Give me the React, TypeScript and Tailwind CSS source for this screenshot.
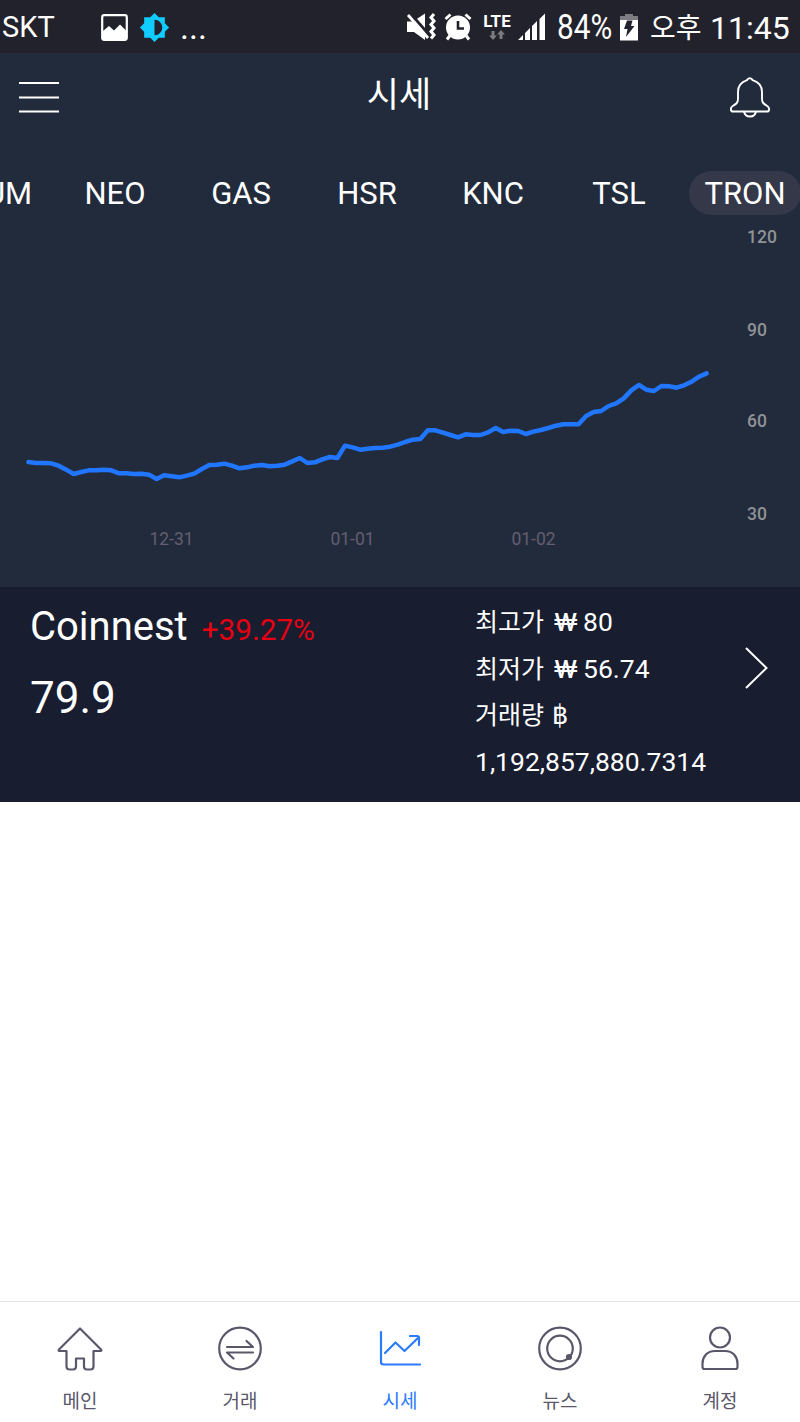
import type { ReactNode } from "react";
import { MdBrightnessMedium } from "react-icons/md";

const coins = ["QTUM", "NEO", "GAS", "HSR", "KNC", "TSL", "TRON"];

// distance below the top of the plot, three units per pixel
const history = [
  336, 339, 339, 340, 347, 359, 372, 366, 361, 361, 359, 361, 370, 370, 372, 371, 374, 387, 376, 379,
  382, 377, 371, 357, 345, 344, 341, 347, 355, 352, 347, 345, 349, 347, 344, 334, 324, 339, 337, 328,
  321, 324, 287, 292, 299, 296, 294, 293, 290, 284, 276, 269, 267, 241, 241, 248, 255, 262, 253, 255,
  255, 247, 234, 246, 242, 243, 252, 245, 240, 234, 227, 223, 223, 223, 198, 186, 183, 168, 160, 145,
  121, 105, 119, 123, 108, 109, 113, 106, 95, 80, 70,
];

const yLabels = [
  { text: "120", y: 26.5 },
  { text: "90", y: 119.5 },
  { text: "60", y: 210.5 },
  { text: "30", y: 304 },
];

const xLabels = [
  { text: "12-31", x: 171.5 },
  { text: "01-01", x: 352.5 },
  { text: "01-02", x: 533.5 },
];

function StatusBar() {
  return (
    <div className="flex h-[53px] items-center bg-[#22222c] text-white">
      <span className="w-[101px] pl-0.5 text-[29px] leading-[54px]">SKT</span>
      <svg width="27" height="27" viewBox="0 0 27 27" className="mt-px shrink-0">
        <rect x="1.2" y="1.2" width="24.6" height="24.6" rx="2" fill="none" stroke="white" strokeWidth="2.2" />
        <path d="M2 17l6-5 5 4.5 6-6 6.500 6.500V25H2z" fill="white" />
      </svg>
      <MdBrightnessMedium className="mt-px ml-[11px] shrink-0 text-[#10ccff]" size={31} />
      <span className="ml-2.5 w-[226px] text-[34px] leading-[56px]">...</span>

      <svg width="30" height="28" viewBox="0 0 30 28" className="mt-px shrink-0">
        <path d="M1 8.500h6l12-8v26.500l-11-8H1z" fill="white" />
        <path d="M4 0l20 23" stroke="#22222c" strokeWidth="3" />
        <path d="M2 2l20 23" stroke="white" strokeWidth="2.800" />
        <path d="M28 1l-3 3.500 3 3.500-3 3.500 3 3.500-3 3.500 3 3.500-3 3.500" fill="none" stroke="white" strokeWidth="3" />
      </svg>
      <svg width="28" height="28" viewBox="0 0 28 28" className="mt-px ml-2 shrink-0">
        <path d="M1.500 6L6.500 1.500M26.500 6L21.500 1.500M6 22.500L3 26.500M22 22.500L25 26.500" stroke="white" strokeWidth="3" />
        <circle cx="14" cy="14.500" r="12" fill="white" />
        <path d="M14 8v7.500h6" fill="none" stroke="#22222c" strokeWidth="2.600" />
      </svg>
      <div className="ml-2.5 flex w-[30px] shrink-0 flex-col items-center">
        <span className="text-[17px] leading-[17px] font-bold">LTE</span>
        <svg width="16" height="10" viewBox="0 0 16 10">
          <path d="M4 10L0 5.500h2.500V1h3v4.500H8zM12 0l4 4.500h-2.500V9h-3V4.500H8z" fill="#7c7c82" />
        </svg>
      </div>
      <svg width="28" height="28" viewBox="0 0 28 28" className="mt-px ml-1.5 shrink-0">
        <path d="M0 27l5-5v5zM7 20l5-5v12H7zM14 13l5-5v19h-5zM21.500 6L27 .5V27h-5.500z" fill="white" />
      </svg>
      <span className="ml-[11px] w-[61px] shrink-0 origin-left scale-x-[0.85] pt-0.5 text-[35px] leading-[58px]">84%</span>
      <svg width="18" height="28" viewBox="0 0 18 28" className="mt-px ml-0.5 shrink-0">
        <path d="M5 1h8v2h5v5H0V3h5z" fill="#7c7c82" />
        <path d="M0 7h18v20.500H0z" fill="white" />
        <path d="M7 7.500h5.500L11 13h3.500L6 24l1.500-8H4z" fill="#22222c" />
      </svg>
      <span className="ml-3 w-[60px] shrink-0 pt-[3px] text-[28px] leading-[53px] whitespace-nowrap">오후</span>
      <span className="shrink-0 pt-[3px] text-[32px] leading-[57px]">11:45</span>
    </div>
  );
}

function Header() {
  return (
    <header className="flex h-[118px] justify-between pr-[29px] pl-[19px] text-white">
      <svg width="40" height="32" viewBox="0 0 40 32" className="mt-7">
        <path d="M0 2h40M0 16.500h40M0 30.500h40" stroke="white" strokeWidth="2" />
      </svg>
      <h1 className="mt-[19px] ml-[10px] text-[35px] leading-[48px]">시세</h1>
      <svg width="42" height="42" viewBox="0 0 42 42" className="mt-[23px]" fill="none" stroke="white" strokeWidth="1.900">
        <path d="M18 4.200a3 3 0 0 1 5.600 0C29.500 6 33 10.500 33 16v7c0 4 2.200 5.200 5.500 7.200 2.200 1.300 2.300 5.300-.5 5.300H4c-2.800 0-2.700-4-.5-5.300C6.800 28.200 9 27 9 23v-7C9 10.500 12.500 6 18 4.200z" />
        <path d="M15 35.500c.6 3.400 3 5 6 5s5.400-1.600 6-5" />
      </svg>
    </header>
  );
}

function CoinTabs() {
  return (
    <div className="flex h-[45px] justify-end overflow-hidden">
      {coins.map((coin) => (
        <div key={coin} className="-mr-[8px] ml-[8px] flex w-[126px] shrink-0 justify-center">
          <button
            className={
              coin === "TRON"
                ? "h-11 w-[112px] rounded-full bg-[#353848] text-[31px] leading-[46px] text-white"
                : "h-11 w-[112px] text-[31px] leading-[46px] text-white"
            }
          >
            {coin}
          </button>
        </div>
      ))}
    </div>
  );
}

function PriceChart() {
  const points = history.map((v, i) => `${28.5 + i * 7.535},${134 + v / 3}`).join(" ");

  return (
    <svg width="800" height="371" viewBox="0 0 800 371" className="block">
      <polyline points={points} fill="none" stroke="#2176ff" strokeWidth="4.500" strokeLinejoin="round" strokeLinecap="round" />
      {yLabels.map((l) => (
        <text key={l.text} x="747" y={l.y} fill="#8f9296" className="text-[17.500px] font-medium">
          {l.text}
        </text>
      ))}
      {xLabels.map((l) => (
        <text key={l.text} x={l.x} y="328.500" textAnchor="middle" fill="#625f70" className="text-[17.500px]">
          {l.text}
        </text>
      ))}
    </svg>
  );
}

function StatRow({ label, symbol, value }: { label: string; symbol: string; value?: string }) {
  return (
    <div className="flex h-[46.670px] items-baseline whitespace-pre">
      <span className="w-[70px] text-[25px]">{label}</span>
      <span className={symbol === "₩" ? "ml-[9px] w-[29px] origin-left scale-x-[1.200]" : "ml-[7px] origin-left scale-x-[0.950]"}>{symbol}</span>
      {value && <span>{value}</span>}
    </div>
  );
}

function ExchangeRow() {
  return (
    <section className="flex h-[215px] bg-[#181d2f] text-white">
      <div className="w-[475px] pt-4 pl-[30px]">
        <div className="flex items-baseline gap-[14px] leading-[48px]">
          <span className="text-[40px]">Coinnest</span>
          <span className="text-[29.700px] text-[#e60012]">+39.27%</span>
        </div>
        <div className="mt-[18px] text-[44px] leading-[52px]">79.9</div>
      </div>
      <div className="w-[240px] pt-3 text-[26.500px] leading-[46.670px]">
        <StatRow label="최고가" symbol="₩" value="80" />
        <StatRow label="최저가" symbol="₩" value="56.74" />
        <StatRow label="거래량" symbol="฿" />
        <div>1,192,857,880.7314</div>
      </div>
      <svg width="24" height="42" viewBox="0 0 24 42" className="mt-[60px] ml-[30px]">
        <path d="M1 1l20.500 20L1 41" fill="none" stroke="white" strokeWidth="2" />
      </svg>
    </section>
  );
}

function NavItem({ label, active, children }: { label: string; active?: boolean; children: ReactNode }) {
  return (
    <button className={active ? "flex flex-1 flex-col items-center pt-6 text-[#2b7bff]" : "flex flex-1 flex-col items-center pt-6 text-[#5b576a]"}>
      <svg width="46" height="46" viewBox="0 0 46 46" fill="none" stroke="currentColor" strokeWidth="2.200" strokeLinecap="round" strokeLinejoin="round">
        {children}
      </svg>
      <span className="mt-4 text-[19px] leading-7">{label}</span>
    </button>
  );
}

function BottomNav() {
  return (
    <nav className="flex h-[121px] border-t border-[#e3e3e6] bg-white">
      <NavItem label="메인">
        <path d="M23 2.500L2 23.500q-1 1.500.5 1.500H9.500v15.500q0 3 3 3h3.500q3 0 3-3v-8h8v8q0 3 3 3h3.500q3 0 3-3V25h7q1.500 0 .5-1.500z" />
      </NavItem>
      <NavItem label="거래">
        <circle cx="23" cy="22.500" r="20.800" />
        <path d="M10 21h26l-6.500-6M36 26.500H10l6.500 6" />
      </NavItem>
      <NavItem label="시세" active>
        <path d="M4 6v30q0 2.500 2.500 2.500H43M8 27l10.500-10.500 9 8.500L42 11M33 10h7q2 0 2 2v7" />
      </NavItem>
      <NavItem label="뉴스">
        <circle cx="23" cy="22.500" r="20.800" />
        <circle cx="23" cy="22.500" r="12.800" />
        <circle cx="32" cy="31" r="2" fill="currentColor" />
      </NavItem>
      <NavItem label="계정">
        <circle cx="23" cy="11.500" r="10" />
        <path d="M18 25h10c8 0 12.500 6 12.500 12.500V41q0 2-2 2h-31q-2 0-2-2v-3.500C5.500 31 10 25 18 25z" />
      </NavItem>
    </nav>
  );
}

export default function App() {
  return (
    <div className="flex h-[1422px] w-[800px] flex-col overflow-hidden bg-white font-[Roboto,'Noto_Sans_CJK_KR',sans-serif]">
      <StatusBar />
      <main className="flex-1">
        <div className="bg-[#222b3c]">
          <Header />
          <CoinTabs />
          <PriceChart />
        </div>
        <ExchangeRow />
      </main>
      <BottomNav />
    </div>
  );
}
